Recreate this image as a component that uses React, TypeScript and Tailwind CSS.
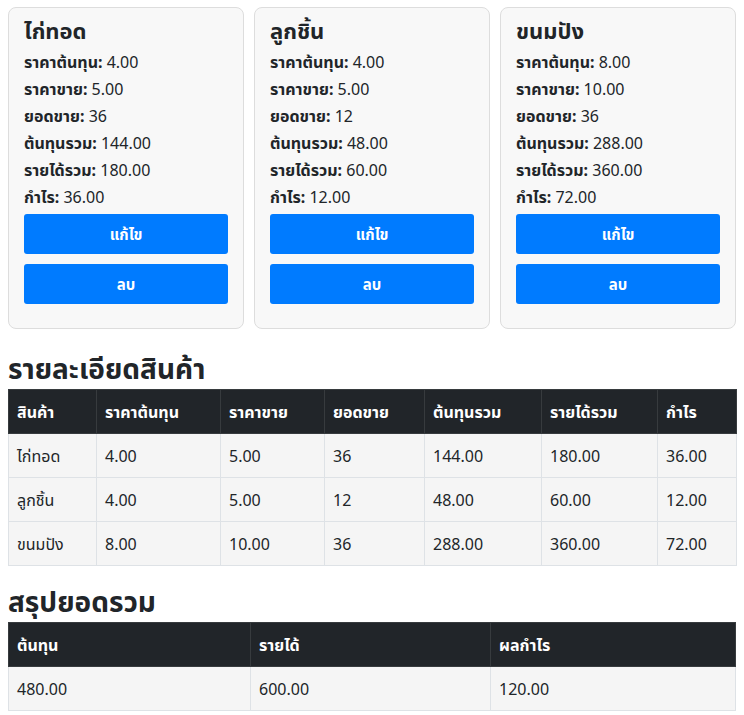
import React from "react";

interface IProduct {
  name: string;
  cost: number;
  price: number;
  sold: number;
}

const products: IProduct[] = [
  { name: "ไก่ทอด", cost: 4, price: 5, sold: 36 },
  { name: "ลูกชิ้น", cost: 4, price: 5, sold: 12 },
  { name: "ขนมปัง", cost: 8, price: 10, sold: 36 },
];

const f = (n: number) => n.toFixed(2);

const ProductCard: React.FC<{ p: IProduct }> = ({ p }) => {
  const total = p.cost * p.sold;
  const income = p.price * p.sold;
  const rows: [string, string][] = [
    ["ราคาต้นทุน", f(p.cost)],
    ["ราคาขาย", f(p.price)],
    ["ยอดขาย", String(p.sold)],
    ["ต้นทุนรวม", f(total)],
    ["รายได้รวม", f(income)],
    ["กำไร", f(income - total)],
  ];
  return (
    <div className="bg-[#f8f8f8] border border-[#dddddd] rounded-lg px-[15px] pt-[5px] pb-[24px] text-[#212529]">
      <h3 className="text-[22px] font-bold leading-[34px] mb-[2px]">{p.name}</h3>
      {rows.map(([k, v]) => (
        <p key={k} className="text-[16px] leading-[27px]">
          <b>{k}:</b> {v}
        </p>
      ))}
      <button className="mt-[3px] w-full h-10 bg-[#007bff] text-white font-bold text-[15px] rounded-[3px]">
        แก้ไข
      </button>
      <button className="mt-[10px] w-full h-10 bg-[#007bff] text-white font-bold text-[15px] rounded-[3px]">
        ลบ
      </button>
    </div>
  );
};

const detailCols = ["สินค้า", "ราคาต้นทุน", "ราคาขาย", "ยอดขาย", "ต้นทุนรวม", "รายได้รวม", "กำไร"];
const detailWidths = ["w-[88px]", "w-[124px]", "w-[104px]", "w-[100px]", "w-[117px]", "w-[116px]", "w-[79px]"];

export default function App() {
  const totalCost = products.reduce((s, p) => s + p.cost * p.sold, 0);
  const totalIncome = products.reduce((s, p) => s + p.price * p.sold, 0);
  return (
    <div className="px-2 pt-[7px] pb-2 font-['Noto_Sans','Noto_Sans_Thai',sans-serif] text-[#212529]">
      <div className="grid grid-cols-3 gap-[10px]">
        {products.map((p) => (
          <ProductCard key={p.name} p={p} />
        ))}
      </div>

      <h2 className="text-[28px] font-bold leading-[40px] mt-[19px] mb-[1px]">รายละเอียดสินค้า</h2>
      <table className="w-full border-collapse table-fixed text-[16px]">
        <thead>
          <tr className="bg-[#212529] text-white h-11">
            {detailCols.map((c, i) => (
              <th key={c} className={`${detailWidths[i]} text-left font-bold px-2 border border-[#373b3e]`}>
                {c}
              </th>
            ))}
          </tr>
        </thead>
        <tbody>
          {products.map((p) => {
            const total = p.cost * p.sold;
            const income = p.price * p.sold;
            const cells = [p.name, f(p.cost), f(p.price), String(p.sold), f(total), f(income), f(income - total)];
            return (
              <tr key={p.name} className="bg-[#f5f5f5] h-11">
                {cells.map((c, i) => (
                  <td key={i} className="px-2 border border-[#dee2e6]">
                    {c}
                  </td>
                ))}
              </tr>
            );
          })}
        </tbody>
      </table>

      <h2 className="text-[28px] font-bold leading-[40px] mt-[15px] mb-[1px]">สรุปยอดรวม</h2>
      <table className="w-full border-collapse table-fixed text-[16px]">
        <thead>
          <tr className="bg-[#212529] text-white h-11">
            <th className="w-[242px] text-left font-bold px-2 border border-[#373b3e]">ต้นทุน</th>
            <th className="w-[240px] text-left font-bold px-2 border border-[#373b3e]">รายได้</th>
            <th className="text-left font-bold px-2 border border-[#373b3e]">ผลกำไร</th>
          </tr>
        </thead>
        <tbody>
          <tr className="bg-[#f5f5f5] h-11">
            <td className="px-2 border border-[#dee2e6]">{f(totalCost)}</td>
            <td className="px-2 border border-[#dee2e6]">{f(totalIncome)}</td>
            <td className="px-2 border border-[#dee2e6]">{f(totalIncome - totalCost)}</td>
          </tr>
        </tbody>
      </table>
    </div>
  );
}
